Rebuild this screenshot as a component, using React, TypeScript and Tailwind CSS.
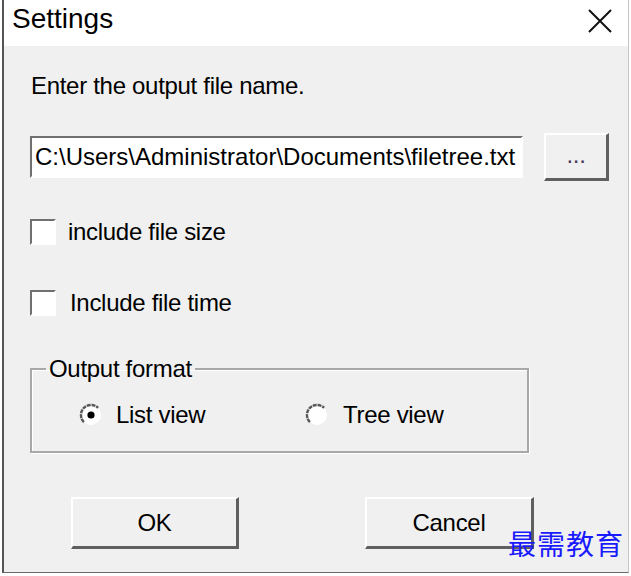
import { useState } from "react";

// sunken / raised win32 style edges
const sunken = "border-t-2 border-l-2 border-r-2 border-b-2 border-t-[#707070] border-l-[#707070] border-r-white border-b-white";
const raised = "border-t-2 border-l-2 border-r-[3px] border-b-[3px] border-t-white border-l-white border-r-[#5f5f5f] border-b-[#5f5f5f] bg-[#f0f0f0]";

function Radio({ checked }: { checked: boolean }) {
    return (
        <svg width="24" height="24" viewBox="0 0 24 24">
            <circle cx="12" cy="12" r="10" fill="#ffffff" />
            <path d="M4.9 19.1 A10 10 0 0 1 19.1 4.9" fill="none" stroke="#5a5a5a" strokeWidth="2.4" strokeDasharray="4 0.8" />
            {checked && <circle cx="12" cy="12" r="3.6" fill="#000" />}
        </svg>
    );
}

function App() {
    const [format, setFormat] = useState<"list" | "tree">("list");
    const [size, setSize] = useState(false);
    const [time, setTime] = useState(false);

    return (
        <main className="w-[631px] h-[576px] bg-white flex flex-col pl-[2px] pr-[2px] pb-[3px] relative font-['Liberation_Sans',Arial,sans-serif] text-black">
            <div className="flex-1 flex flex-col border-l-2 border-l-[#555] border-r border-r-[#c4c4c4] border-b border-b-[#6a6a6a]">
                {/* タイトルバー */}
                <div className="h-[46px] bg-white flex items-center justify-between pl-[8px] pr-[16px]">
                    <span className="text-[28px] leading-none -mt-[8px]">Settings</span>
                    <svg width="24" height="24" viewBox="0 0 24 24" className="-mt-[4px]">
                        <path d="M1 1 L23 23 M23 1 L1 23" stroke="#111" strokeWidth="2" />
                    </svg>
                </div>

                <div className="flex-1 bg-[#f0f0f0] pl-[26px] flex flex-col text-[24px] leading-[28px] tracking-[-0.3px]">
                    <p className="mt-[26px] pl-[1px]">Enter the output file name.</p>

                    <div className="mt-[33px] h-[48px] flex items-center">
                        <div className={`w-[493px] h-[42px] bg-white flex items-center pl-[3px] tracking-normal ${sunken}`}>
                            C:\Users\Administrator\Documents\filetree.txt
                        </div>
                        <button className={`ml-[21px] w-[65px] h-[48px] flex items-center justify-center pb-[4px] text-[#4a3a5a] ${raised}`}>
                            ...
                        </button>
                    </div>

                    <label className="mt-[37px] h-[28px] flex items-center" onClick={() => setSize(!size)}>
                        <span className={`w-[26px] h-[26px] bg-white flex items-center justify-center text-[18px] ${sunken}`}>{size ? "✓" : ""}</span>
                        <span className="ml-[12px]">include file size</span>
                    </label>

                    <label className="mt-[43px] h-[28px] flex items-center" onClick={() => setTime(!time)}>
                        <span className={`w-[26px] h-[26px] bg-white flex items-center justify-center text-[18px] ${sunken}`}>{time ? "✓" : ""}</span>
                        <span className="ml-[14px]">Include file time</span>
                    </label>

                    <fieldset className="mt-[38px] w-[499px] border-2 border-[#a8a8a8] shadow-[inset_1px_1px_0_#fff,1px_1px_0_#fff]">
                        <legend className="ml-[14px] px-[3px]">Output format</legend>
                        <div className="pl-[47px] pt-[18px] pb-[22px]">
                            <div className="h-[28px] flex items-center">
                                <div className="w-[226px] flex items-center cursor-default" onClick={() => setFormat("list")}>
                                    <Radio checked={format === "list"} />
                                    <span className="ml-[13px]">List view</span>
                                </div>
                                <div className="flex items-center cursor-default" onClick={() => setFormat("tree")}>
                                    <Radio checked={format === "tree"} />
                                    <span className="ml-[14px]">Tree view</span>
                                </div>
                            </div>
                        </div>
                    </fieldset>

                    <div className="mt-[44px] flex">
                        <button className={`ml-[41px] w-[168px] h-[52px] flex items-center justify-center ${raised}`}>OK</button>
                        <button className={`ml-[126px] w-[169px] h-[52px] flex items-center justify-center ${raised}`}>Cancel</button>
                    </div>
                </div>
            </div>

            {/* 透かし */}
            <span className="absolute left-[508px] top-[527px] text-[28px] leading-[32px] tracking-[1px] text-[#1a1aff] font-['Noto_Sans_CJK_SC',sans-serif]">最需教育</span>
        </main>
    );
}

export default App;
